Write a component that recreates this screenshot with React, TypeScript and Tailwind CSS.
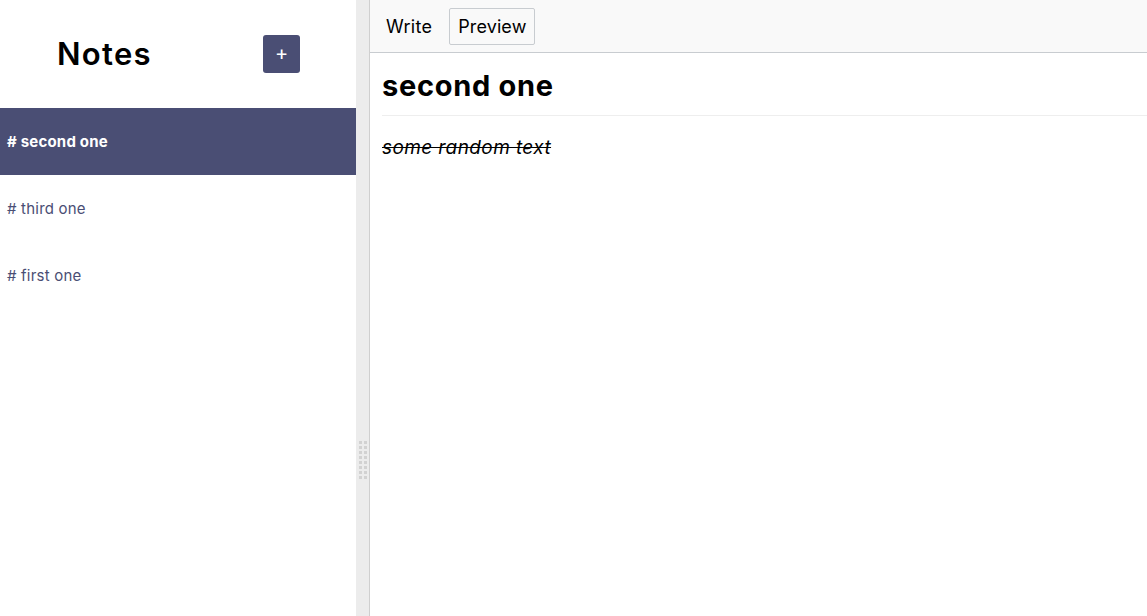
import React, { useState } from "react";

type Note = { id: string; body: string };

const notes: Note[] = [
  { id: "2", body: "# second one\n\n~~*some random text*~~" },
  { id: "3", body: "# third one" },
  { id: "1", body: "# first one" },
];

export default function App() {
  const [currentId, setCurrentId] = useState("2");
  const [tab, setTab] = useState<"write" | "preview">("preview");

  return (
    <div
      className="flex h-[616px] w-full overflow-hidden bg-white text-black"
      style={{ fontFamily: "Inter, 'Noto Sans', sans-serif" }}
    >
      {/* Sidebar */}
      <section className="w-[356px] shrink-0 bg-white">
        <div className="flex h-[108px] items-center pl-[57px] pr-[56px]">
          <h3 className="text-[31px] font-semibold tracking-[1.3px]">Notes</h3>
          <button className="ml-auto flex h-[38px] w-[37px] items-center justify-center rounded-[3px] bg-[#4a4e74] pb-[2px] text-[20px] text-white">
            +
          </button>
        </div>
        {notes.map((note) => {
          const selected = note.id === currentId;
          return (
            <div
              key={note.id}
              onClick={() => setCurrentId(note.id)}
              className={`flex h-[67px] cursor-pointer items-center px-[7px] pt-[1px] text-[15px] tracking-[0.2px] ${
                selected ? "bg-[#4a4e74] font-bold text-white" : "text-[#4a4e74]"
              }`}
            >
              {note.body.split("\n")[0]}
            </div>
          );
        })}
      </section>

      {/* Gutter */}
      <div className="flex w-[14px] shrink-0 items-center justify-center border-r border-[#cfcfcf] bg-[#ececec]">
        <div className="grid grid-cols-2 gap-[2px] pt-[304px]">
          {Array.from({ length: 16 }).map((_, i) => (
            <span key={i} className="h-[3px] w-[3px] bg-[#d2d2d2]" />
          ))}
        </div>
      </div>

      {/* Editor */}
      <section className="flex min-w-0 flex-1 flex-col">
        <div className="flex h-[53px] shrink-0 items-center gap-[8px] border-b border-[#c8ccd0] bg-[#f9f9f9] px-[7px]">
          <button
            onClick={() => setTab("write")}
            className={`h-[37px] rounded-[2px] border px-[8px] text-[18px] tracking-[0.3px] ${
              tab === "write" ? "border-[#c8ccd0] bg-[#f9f9f9]" : "border-transparent"
            }`}
          >
            Write
          </button>
          <button
            onClick={() => setTab("preview")}
            className={`h-[37px] rounded-[2px] border px-[8px] text-[18px] tracking-[0.1px] ${
              tab === "preview" ? "border-[#c8ccd0] bg-[#f9f9f9]" : "border-transparent"
            }`}
          >
            Preview
          </button>
        </div>
        <div className="pl-[12px] pt-[14px]">
          <h1 className="border-b border-[#eeeeee] pb-[10px] text-[29px] font-bold leading-[38px] tracking-[0.7px]">
            second one
          </h1>
          <p className="mt-[18px] text-[19px] italic tracking-[0.4px] line-through">some random text</p>
        </div>
      </section>
    </div>
  );
}
